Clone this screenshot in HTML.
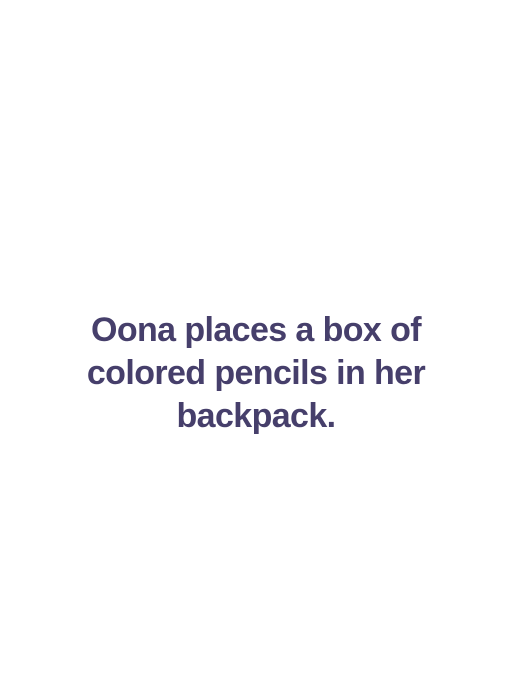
<!DOCTYPE html>
<html><head><style>
html,body{margin:0;padding:0;background:#fff;width:512px;height:700px;overflow:hidden}
.t{position:absolute;left:0;width:512px;top:309px;text-align:center;font-family:"Liberation Sans",sans-serif;font-weight:bold;font-size:34px;line-height:43px;color:#463f6b;letter-spacing:-0.6px}
</style></head><body>
<div class="t">Oona places a box of<br>colored pencils in her<br>backpack.</div>
</body></html>
